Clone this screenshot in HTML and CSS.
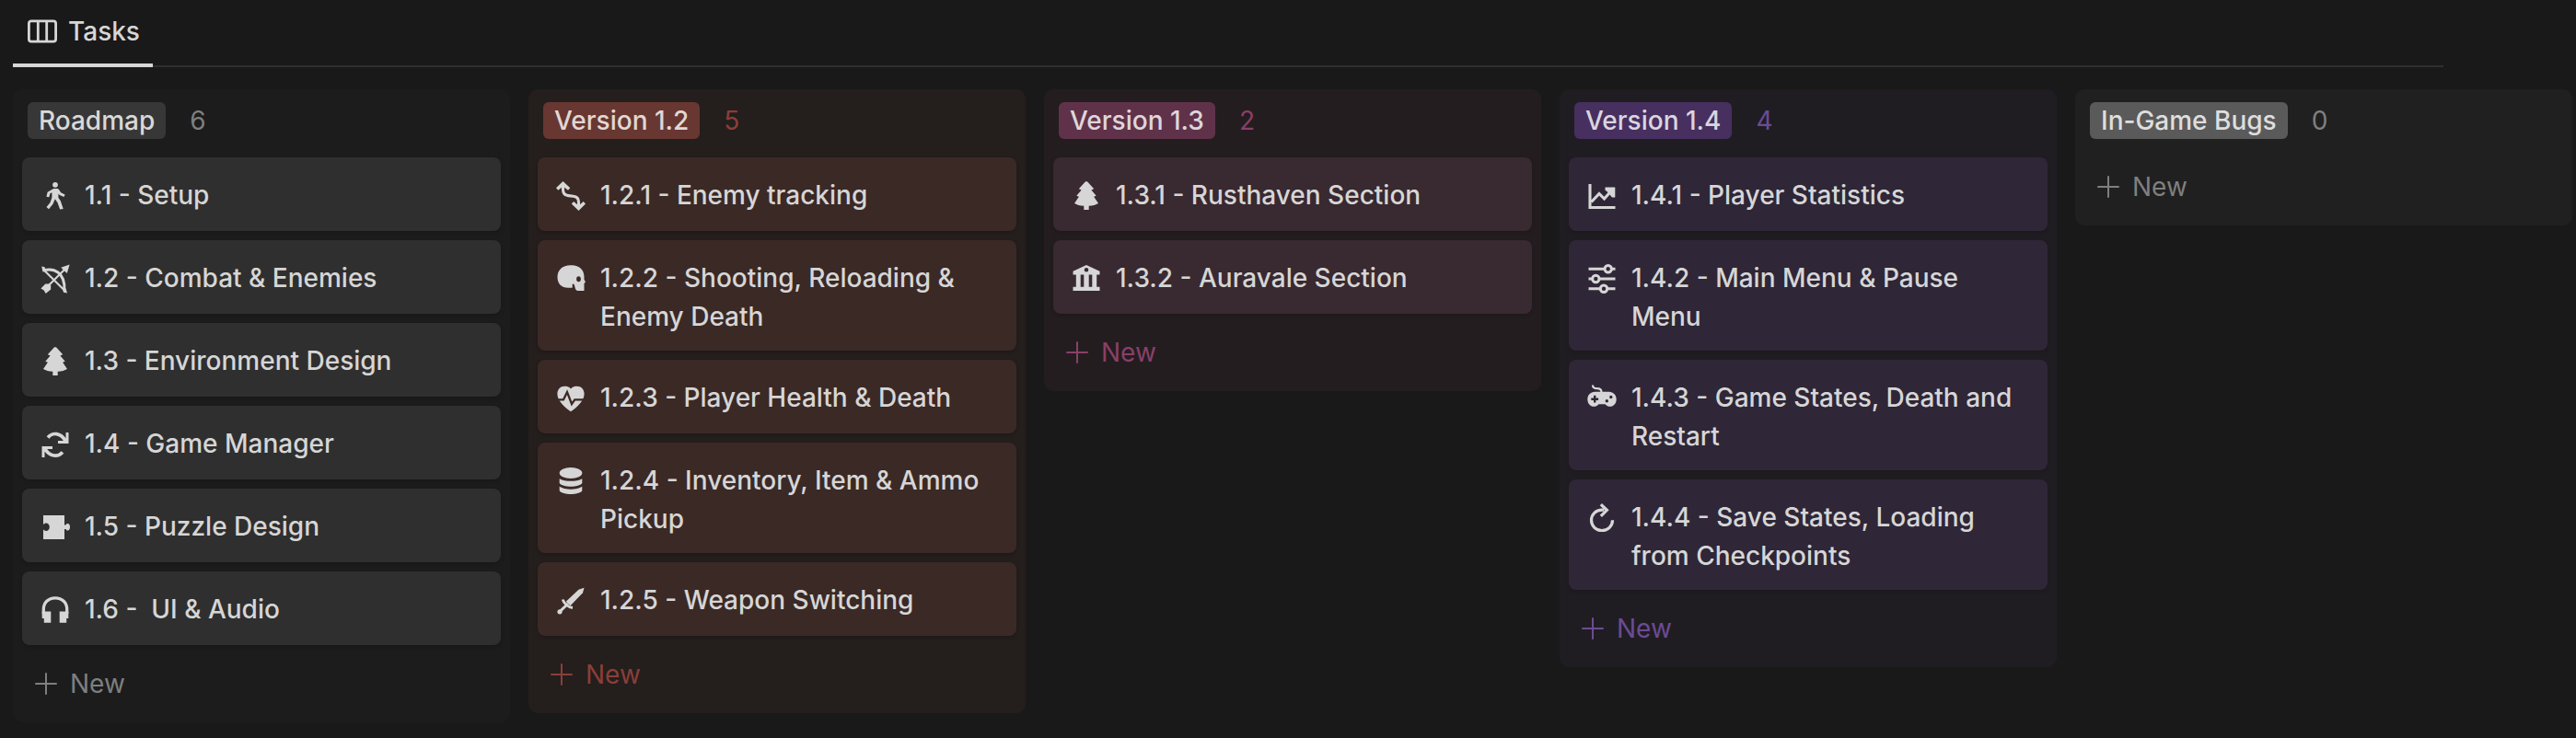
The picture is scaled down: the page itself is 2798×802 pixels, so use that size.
FILE: index.html
```html
<!DOCTYPE html>
<html lang="en">
<head>
<meta charset="utf-8">
<title>Tasks</title>
<link rel="stylesheet" href="styles.css">
</head>
<body>
<svg class="sprite" aria-hidden="true">
  <symbol id="i-board" viewBox="0 0 32 32"><path d="M4 4.800h24a2.600 2.600 0 0 1 2.600 2.600v17.200a2.600 2.600 0 0 1-2.600 2.600H4a2.600 2.600 0 0 1-2.600-2.600V7.400A2.600 2.600 0 0 1 4 4.800zM11.300 5v22M20.700 5v22" fill="none" stroke="currentColor" stroke-width="2.800"/></symbol>
  <symbol id="i-plus" viewBox="0 0 24 24"><path d="M12 1v22M1 12h22" fill="none" stroke="currentColor" stroke-width="2" stroke-linecap="round"/></symbol>
  <symbol id="i-walk" viewBox="0 0 32 32"><circle cx="16" cy="3.800" r="2.900"/><path d="M14.200 8h3.600c1.200 0 1.800.4 2.400 1.300l1.900 2.900 4.500 2.300-1.200 2.600-5-2.300-1-1.300v4.300l2.500 3.800 2.800 8.300-3.600.7-2.600-7.400-2.700-3.900-2.300 5.500-4.500 5.400-2.500-2.200 3.900-4.800 2-5.400v-5.600l-2 1.100-1 3.900-3-.5 1.200-4.900z"/></symbol>
  <symbol id="i-bow" viewBox="0 0 32 32"><path d="M2.700 5.500 27.300 29.700M5 27 28 4" fill="none" stroke="currentColor" stroke-width="2.100"/><path d="M3.500 6.800c6-1.600 11-1.200 15.500 2.200 6 4.500 7.500 10.500 6.800 19.500" fill="none" stroke="currentColor" stroke-width="3"/><path d="M31.600.6 28.800 10 22.200 3.800zM.4 26.500l4.900-5h4.500l1.400 1.400v4.600l-5.500 4.500-2-3.500zM1.200 2.500l3.300.7 1.500 4.300-3.500 1zM29 31.500l-4-.8-.8-3 3.300-1.400z"/></symbol>
  <symbol id="i-tree" viewBox="0 0 32 32"><path d="M16 .3c1 0 1.500.4 2.100 1.200l6.100 6.800-2.800 1.100 5.300 6.400-2.600.9 4.900 7.200c-2.800 1.700-5.800 2.500-10.300 2.900V31h-5.400v-4.200C8.800 26.400 5.800 25.600 3 23.900l4.900-7.200-2.600-.9 5.300-6.400-2.800-1.100 6.100-6.800C14.500.7 15 .3 16 .3z"/></symbol>
  <symbol id="i-sync" viewBox="0 0 32 32"><path d="M8 8.500c5-6 14-5.500 19 3.500M24 24.500C19 30 10 29.500 5 21" fill="none" stroke="currentColor" stroke-width="3.600"/><path d="M30.500 3v12H19v-3h5.500l3-3V3zM1.500 30V18H13v3H7.500l-3 3v6z"/></symbol>
  <symbol id="i-puzzle" viewBox="0 0 32 32"><path d="M3 3h23v10.500h1.500c.6-1.200 1.200-1.500 2-1.500 1.600 0 2.500 1.600 2.500 3.700s-.9 3.800-2.500 3.800c-.8 0-1.400-.4-2-1.500H26v11H3V18.300c.8 1 1.800 1.600 3 1.600 2.300 0 3.800-1.700 3.800-4.200S8.300 11.500 6 11.500c-1.200 0-2.200.6-3 1.600z"/></symbol>
  <symbol id="i-phones" viewBox="0 0 32 32"><path d="M3.300 20v-5C3.300 8 8.500 2.800 16 2.800S28.700 8 28.700 15v5" fill="none" stroke="currentColor" stroke-width="3.300"/><path d="M1.700 17.500h9.600v12.200H3.800V25H1.700zM30.300 17.500h-9.600v12.200h7.500V25h2.100z"/></symbol>
  <symbol id="i-route" viewBox="0 0 32 32"><path d="M7.500 4v5c0 4 2 6.200 5.800 6.600l5.400.6c4 .4 5.800 2.800 5.800 6.300V28" fill="none" stroke="currentColor" stroke-width="3.100"/><path d="M7.500 0 15.300 7.300 13 9.700 7.500 5.500 2.300 9.700 0 7.300zM24.500 32 16.800 24.500l2.300-2.400 5.400 4.400 5.200-4.400 2.300 2.400z"/></symbol>
  <symbol id="i-skull" viewBox="0 0 32 32"><path fill-rule="evenodd" d="M15.500 1.300h1.500C25.500 1.300 30.300 6.500 30.500 13.500v3.300l1.500 2.700-1.500 1.500v8H23l-1.800-1.500-1.700-5.800h-1.800v4H13C6 25.700 1.500 21.500 1.500 14 1.500 6.500 7 1.300 15.500 1.300zM24.500 13.300c-1.500 0-2.400 1.300-2.400 3s.9 3 2.400 3 2.400-1.300 2.400-3-.9-3-2.400-3z"/></symbol>
  <symbol id="i-heart" viewBox="0 0 32 32"><path d="M16 5.500C18 3.300 20.300 2.800 22.700 2.800c4.600 0 7.900 3.400 7.900 8.200C30.600 19 22.500 25.500 16 30.300 9.500 25.500 1.400 19 1.400 11c0-4.800 3.300-8.200 7.900-8.200 2.400 0 4.700.5 6.700 2.700z"/><path class="cut" d="M0 17.300h8L12 9.200l5 12.800 3.300-4.700H32" fill="none" stroke-width="2.300"/></symbol>
  <symbol id="i-stack" viewBox="0 0 32 32"><ellipse cx="16" cy="7" rx="12.300" ry="6"/><path d="M3.700 13.200c6 3.500 18.600 3.500 24.600 0v4.800c-3.500 5-21.100 5-24.600 0zM3.700 21.700c6 4 18.600 4 24.600 0v4.500c-3.500 5-21.100 5-24.600 0z"/></symbol>
  <symbol id="i-sword" viewBox="0 0 32 32"><path d="M30.500 1.800 29 7.200 15.500 21.300 10.700 16.800 24.500 3.700z"/><path d="M7.300 14.500c.7 3 2 4.300 4 5.800 2 1.600 4 2.700 6.700 3.200M13 19l-9 8.700" fill="none" stroke="currentColor" stroke-width="3"/><circle cx="4" cy="27.800" r="2.600"/></symbol>
  <symbol id="i-bank" viewBox="0 0 32 32"><path fill-rule="evenodd" d="M16 1 30.500 7.800v3.800h-3.300v13.200h3.300V29h-29v-4.200h3.300V11.600H1.500V7.800zM16 4a2.300 2.300 0 1 0 0 4.600A2.300 2.300 0 0 0 16 4zM9.700 11.600v13.200h3.600V11.600zM18.700 11.600v13.200h3.600V11.600z"/></symbol>
  <symbol id="i-chart" viewBox="0 0 32 32"><path d="M3 3v25.500h27.500M4.500 22.500l8.500-9 5.500 5.500 8-9" fill="none" stroke="currentColor" stroke-width="3.100"/><path d="M19.500 6.500h10.800v11H27l-2.500-3-3-3.500-2-1.200z"/></symbol>
  <symbol id="i-sliders" viewBox="0 0 32 32"><g fill="none" stroke="currentColor" stroke-width="3"><path d="M1.500 5.300h17M27 5.300h3.500M1.500 16H5M13.500 16h17M1.500 26.700H14M22 26.700h8.500"/><circle cx="22.700" cy="5.300" r="3.700"/><circle cx="9.300" cy="16" r="3.700"/><circle cx="18" cy="26.700" r="3.700"/></g></symbol>
  <symbol id="i-pad" viewBox="0 0 32 32"><path d="M6 1.500c0 3 1.500 3.700 4.500 3.700s5 .8 5 4" fill="none" stroke="currentColor" stroke-width="2.200"/><path fill-rule="evenodd" d="M8.500 8.700h15c5 0 8.200 3.600 8.200 8.300 0 4.400-3 7.800-6.900 7.800-2.600 0-4-1.200-5.300-2.600h-7c-1.300 1.400-2.700 2.600-5.300 2.600-3.900 0-6.900-3.400-6.900-7.800 0-4.700 3.200-8.300 8.200-8.300zM7 12.800v2.700H4.300v2.400H7v2.700h2.400v-2.700h2.700v-2.400H9.400v-2.700zM25.800 12.800a1.700 1.700 0 1 0 0 3.400 1.700 1.700 0 0 0 0-3.400zM21.300 17a1.700 1.700 0 1 0 0 3.400 1.700 1.700 0 0 0 0-3.400z"/></symbol>
  <symbol id="i-redo" viewBox="0 0 32 32"><path d="M18 7.200h-2C9.500 7.200 4.500 12 4.500 18.300c0 6.500 5 11.200 11.500 11.200s11.500-4.700 11.500-11.200" fill="none" stroke="currentColor" stroke-width="3.200"/><path d="M16 0l7.700 7.300L16 15l-2.300-2.300L19 7.500l-5.300-5.200z"/></symbol>
</svg>

<nav class="tabs">
  <button class="tab" type="button"><svg class="icon"><use href="#i-board"/></svg>Tasks</button>
</nav>

<main class="board">
  <section class="column gray">
    <header class="head"><h2 class="tag">Roadmap</h2><span class="count">6</span></header>
    <article class="card"><svg class="icon"><use href="#i-walk"/></svg><h3 class="title">1.1 - Setup</h3></article>
    <article class="card"><svg class="icon"><use href="#i-bow"/></svg><h3 class="title">1.2 - Combat &amp; Enemies</h3></article>
    <article class="card"><svg class="icon"><use href="#i-tree"/></svg><h3 class="title">1.3 - Environment Design</h3></article>
    <article class="card"><svg class="icon"><use href="#i-sync"/></svg><h3 class="title">1.4 - Game Manager</h3></article>
    <article class="card"><svg class="icon"><use href="#i-puzzle"/></svg><h3 class="title">1.5 - Puzzle Design</h3></article>
    <article class="card"><svg class="icon"><use href="#i-phones"/></svg><h3 class="title">1.6 - &nbsp;UI &amp; Audio</h3></article>
    <button class="new" type="button"><svg class="plus"><use href="#i-plus"/></svg>New</button>
  </section>

  <section class="column red">
    <header class="head"><h2 class="tag">Version 1.2</h2><span class="count">5</span></header>
    <article class="card"><svg class="icon"><use href="#i-route"/></svg><h3 class="title">1.2.1 - Enemy tracking</h3></article>
    <article class="card"><svg class="icon"><use href="#i-skull"/></svg><h3 class="title">1.2.2 - Shooting, Reloading &amp; Enemy Death</h3></article>
    <article class="card"><svg class="icon"><use href="#i-heart"/></svg><h3 class="title">1.2.3 - Player Health &amp; Death</h3></article>
    <article class="card"><svg class="icon"><use href="#i-stack"/></svg><h3 class="title">1.2.4 - Inventory, Item &amp; Ammo Pickup</h3></article>
    <article class="card"><svg class="icon"><use href="#i-sword"/></svg><h3 class="title">1.2.5 - Weapon Switching</h3></article>
    <button class="new" type="button"><svg class="plus"><use href="#i-plus"/></svg>New</button>
  </section>

  <section class="column pink">
    <header class="head"><h2 class="tag">Version 1.3</h2><span class="count">2</span></header>
    <article class="card"><svg class="icon"><use href="#i-tree"/></svg><h3 class="title">1.3.1 - Rusthaven Section</h3></article>
    <article class="card"><svg class="icon"><use href="#i-bank"/></svg><h3 class="title">1.3.2 - Auravale Section</h3></article>
    <button class="new" type="button"><svg class="plus"><use href="#i-plus"/></svg>New</button>
  </section>

  <section class="column purple">
    <header class="head"><h2 class="tag">Version 1.4</h2><span class="count">4</span></header>
    <article class="card"><svg class="icon"><use href="#i-chart"/></svg><h3 class="title">1.4.1 - Player Statistics</h3></article>
    <article class="card"><svg class="icon"><use href="#i-sliders"/></svg><h3 class="title">1.4.2 - Main Menu &amp; Pause Menu</h3></article>
    <article class="card"><svg class="icon"><use href="#i-pad"/></svg><h3 class="title">1.4.3 - Game States, Death and Restart</h3></article>
    <article class="card"><svg class="icon"><use href="#i-redo"/></svg><h3 class="title">1.4.4 - Save States, Loading from Checkpoints</h3></article>
    <button class="new" type="button"><svg class="plus"><use href="#i-plus"/></svg>New</button>
  </section>

  <section class="column light">
    <header class="head"><h2 class="tag">In-Game Bugs</h2><span class="count">0</span></header>
    <button class="new" type="button"><svg class="plus"><use href="#i-plus"/></svg>New</button>
  </section>
</main>
</body>
</html>
```
FILE: styles.css
```css
* { box-sizing: border-box; }

body {
  margin: 0;
  background: #191919;
  color: #d6d6d6;
  font: 500 28px/42px Inter, "Liberation Sans", sans-serif;
}

h2, h3 { margin: 0; font: inherit; }

button {
  border: 0;
  background: none;
  color: inherit;
  font: inherit;
  cursor: pointer;
}

.sprite { display: none; }

.icon {
  flex: none;
  width: 32px;
  height: 32px;
  fill: currentColor;
}

.cut { stroke: var(--card); }

.tabs {
  display: flex;
  margin: 0 144px 24px 14px;
  box-shadow: inset 0 -2px #2f2f2f;
}

.tab {
  display: flex;
  align-items: center;
  gap: 12px;
  height: 73px;
  padding: 0 14px 2px 16px;
  border-bottom: 4px solid #d6d6d6;
}

.board {
  display: grid;
  grid-template-columns: repeat(5, minmax(0, 1fr));
  align-items: start;
  gap: 20px;
  padding: 0 4px 16px 14px;
}

.column {
  display: flex;
  flex-direction: column;
  gap: 10px;
  padding: 0 10px 10px;
  border-radius: 10px;
  background: var(--column);
}

.head {
  display: flex;
  align-items: center;
  gap: 26px;
  height: 64px;
  padding: 4px 6px 0;
}

.tag {
  padding: 0 12px;
  border-radius: 6px;
  background: var(--tag);
  color: var(--tag-text);
  line-height: 40px;
}

.count, .new { color: var(--accent); font-weight: 400; }

.card {
  display: flex;
  align-items: flex-start;
  gap: 16px;
  min-height: 80px;
  padding: 20px 20px 16px;
  border-radius: 8px;
  background: var(--card);
  box-shadow: 0 2px 4px rgba(0, 0, 0, 0.16);
}

.card .icon { margin-top: 6px; }

.new {
  display: flex;
  align-items: center;
  gap: 14px;
  height: 64px;
  padding: 0 14px;
}

.plus { width: 24px; height: 24px; }

.gray { --column: #1c1c1c; --card: #2f2f2f; --tag: #373737; --tag-text: #d9d9d9; --accent: #7f7f7f; }
.red { --column: #241e1d; --card: #3b2926; --tag: #683731; --tag-text: #e1d7d6; --accent: #8a3f37; }
.pink { --column: #231d1f; --card: #392930; --tag: #60324a; --tag-text: #dfd6da; --accent: #8a3f68; }
.purple { --column: #201d22; --card: #2f2637; --tag: #472f60; --tag-text: #dad5de; --accent: #6c4b95; }
.light { --column: #202020; --card: #2f2f2f; --tag: #5a5a5a; --tag-text: #dedede; --accent: #7f7f7f; }
```
